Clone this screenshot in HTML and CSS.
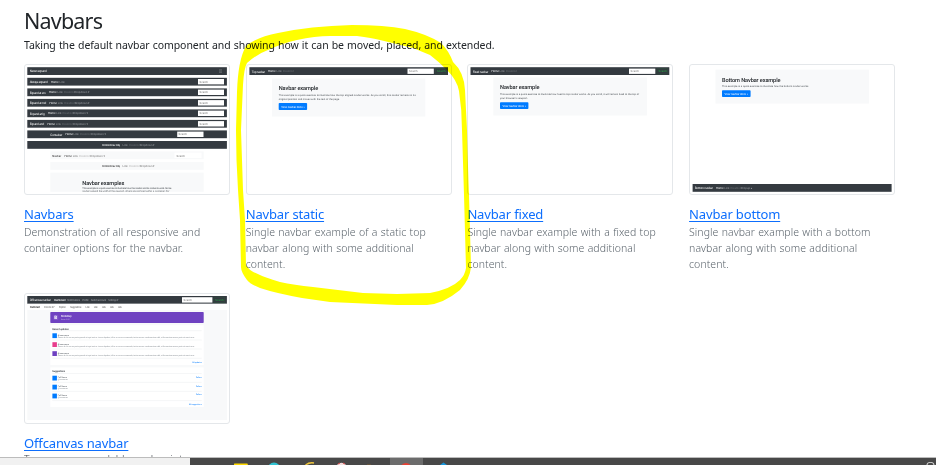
FILE: index.html
```html
<!DOCTYPE html>
<html lang="en">
<head>
<meta charset="utf-8">
<title>Navbars</title>
<link rel="stylesheet" href="styles.css">
</head>
<body>
<main class="page">
  <h2 class="title">Navbars</h2>
  <p class="lead">Taking the default navbar component and showing how it can be moved, placed, and extended.</p>
  <div class="grid">
    <article class="card">
      <svg class="thumb" viewBox="25 65 204 129">
        <g fill="#343a40">
          <rect x="27.3" y="67.2" width="199.6" height="7.8"/><rect x="27.3" y="77.8" width="199.6" height="7.8"/>
          <rect x="27.3" y="88.4" width="199.6" height="7.8"/><rect x="27.3" y="98.9" width="199.6" height="7.8"/>
          <rect x="27.3" y="109.4" width="199.6" height="7.8"/><rect x="27.3" y="119.9" width="199.6" height="7.8"/>
          <rect x="27.3" y="130.4" width="199.6" height="7.8"/><rect x="27.3" y="141" width="199.6" height="7.8"/>
        </g>
        <g fill="#f8f9fa"><rect x="50.3" y="151.4" width="153.4" height="7.8"/><rect x="50.3" y="162" width="153.4" height="7.8"/><rect x="50.3" y="172.6" width="153.4" height="19.2"/></g>
        <g fill="#fff">
          <rect x="198" y="79" width="26" height="5.4"/><rect x="198" y="89.6" width="26" height="5.4"/><rect x="198" y="100.1" width="26" height="5.4"/>
          <rect x="198" y="110.6" width="26" height="5.4"/><rect x="198" y="121.1" width="26" height="5.4"/><rect x="177.2" y="131.6" width="26.3" height="5.4"/><rect x="174.5" y="152.6" width="27" height="5.4"/>
        </g>
        <g class="brand">
          <text x="29.7" y="72.3" textLength="17">Never expand</text><text x="29.7" y="82.9" textLength="18">Always expand</text>
          <text x="29.7" y="93.5" textLength="16">Expand at sm</text><text x="29.7" y="104" textLength="16.5">Expand at md</text>
          <text x="29.7" y="114.5" textLength="15">Expand at lg</text><text x="29.7" y="125" textLength="14.5">Expand at xl</text>
          <text x="50.3" y="135.5" textLength="12">Container</text>
        </g>
        <g class="nav">
          <text x="51" y="82.8" class="on">Home</text><text x="59.5" y="82.8">Link</text>
          <text x="49" y="93.4" class="on">Home</text><text x="57.5" y="93.4">Link</text><text x="64" y="93.4" class="off">Disabled</text><text x="74.5" y="93.4">Dropdown ▾</text>
          <text x="49.4" y="103.9" class="on">Home</text><text x="57.8" y="103.9">Link</text><text x="64.2" y="103.9" class="off">Disabled</text><text x="74.7" y="103.9">Dropdown ▾</text>
          <text x="48" y="114.4" class="on">Home</text><text x="56.3" y="114.4">Link</text><text x="62.6" y="114.4" class="off">Disabled</text><text x="73" y="114.4">Dropdown ▾</text>
          <text x="47.4" y="124.9" class="on">Home</text><text x="55.8" y="124.9">Link</text><text x="62" y="124.9" class="off">Disabled</text><text x="73" y="124.9">Dropdown ▾</text>
          <text x="65.4" y="135.4" class="on">Home</text><text x="73.5" y="135.4">Link</text><text x="80" y="135.4" class="off">Disabled</text><text x="91" y="135.4">Dropdown ▾</text>
          <text x="102" y="146" class="on" textLength="18">Centered nav only</text><text x="122.5" y="146">Link</text><text x="129" y="146" class="off">Disabled</text><text x="139.7" y="146">Dropdown ▾</text>
        </g>
        <g class="nav light">
          <text x="52.2" y="156.6" class="on" textLength="9">Navbar</text><text x="64.4" y="156.5" class="on">Home</text><text x="72.7" y="156.5">Link</text><text x="79" y="156.5" class="off">Disabled</text><text x="90" y="156.5">Dropdown ▾</text>
          <text x="102" y="167" class="on" textLength="18">Centered nav only</text><text x="122.5" y="167">Link</text><text x="129" y="167" class="off">Disabled</text><text x="139.7" y="167">Dropdown ▾</text>
          <text x="199.5" y="82.8">Search</text><text x="199.5" y="93.4">Search</text><text x="199.5" y="103.9">Search</text><text x="199.5" y="114.4">Search</text><text x="199.5" y="124.9">Search</text><text x="178.5" y="135.4">Search</text><text x="176.5" y="156.5">Search</text>
        </g>
        <path d="M219 69.8h3M219 71.1h3M219 72.4h3" stroke="#858a8f" stroke-width=".5"/>
        <text x="82.3" y="184.6" class="head" textLength="42">Navbar examples</text>
        <text x="82.3" y="189.4" class="copy" textLength="89">This example is a quick exercise to illustrate how the navbar and its contents work. Some</text>
        <svg x="82" y="190" width="95" height="1.7" viewBox="82 190 95 1.7"><text x="82.3" y="192.4" class="copy" textLength="87">navbars extend the width of the viewport, others are confined within a .container. For</text></svg>
      </svg>
      <h3 class="name"><a href="#">Navbars</a></h3>
      <p class="desc">Demonstration of all responsive and<br>container options for the navbar.</p>
    </article>

    <article class="card">
      <svg class="thumb" viewBox="247 65 204 129">
        <rect x="249.4" y="67.2" width="198.6" height="7.8" fill="#343a40"/>
        <rect x="407.5" y="68.6" width="26.3" height="5.3" fill="#fff"/><rect x="435.6" y="68.6" width="10.5" height="5.3" rx=".6" class="btn"/>
        <g class="brand"><text x="251.7" y="72.5" textLength="13.3">Top navbar</text></g>
        <g class="nav"><text x="268" y="72.3" class="on">Home</text><text x="276.5" y="72.3">Link</text><text x="283" y="72.3" class="off">Disabled</text></g>
        <g class="nav light"><text x="409" y="72.3">Search</text></g><text x="437" y="72.3" class="green">Search</text>
        <rect x="272" y="78.5" width="153.3" height="38" fill="#f8f9fa"/>
        <text x="278.7" y="90.3" class="head" textLength="39.5">Navbar example</text>
        <text x="278.7" y="96" class="copy" textLength="137">This example is a quick exercise to illustrate how the top-aligned navbar works. As you scroll, this navbar remains in its</text>
        <text x="278.7" y="100.2" class="copy" textLength="61">original position and moves with the rest of the page.</text>
        <rect x="278.7" y="103" width="28.4" height="7" rx=".8" fill="#007bff"/><text x="281.2" y="107.6" class="action" textLength="23.5">View navbar docs »</text>
      </svg>
      <h3 class="name"><a href="#">Navbar static</a></h3>
      <p class="desc">Single navbar example of a static top<br>navbar along with some additional<br>content.</p>
    </article>

    <article class="card">
      <svg class="thumb" viewBox="468.5 65 204 129">
        <rect x="471" y="67.2" width="198.8" height="7.8" fill="#343a40"/>
        <rect x="629.5" y="68.6" width="26.3" height="5.3" fill="#fff"/><rect x="657.4" y="68.6" width="10.5" height="5.3" rx=".6" class="btn"/>
        <g class="brand"><text x="473.2" y="72.5" textLength="15.5">Fixed navbar</text></g>
        <g class="nav"><text x="492" y="72.3" class="on">Home</text><text x="500" y="72.3">Link</text><text x="506.5" y="72.3" class="off">Disabled</text></g>
        <g class="nav light"><text x="631" y="72.3">Search</text></g><text x="659" y="72.3" class="green">Search</text>
        <rect x="493.8" y="77.5" width="153.6" height="38" fill="#f8f9fa"/>
        <text x="500.5" y="89.4" class="head" textLength="39.5">Navbar example</text>
        <text x="500.5" y="94.9" class="copy" textLength="139">This example is a quick exercise to illustrate how fixed to top navbar works. As you scroll, it will remain fixed to the top of</text>
        <text x="500.5" y="99.1" class="copy" textLength="28">your browser’s viewport.</text>
        <rect x="500.5" y="102.2" width="28.4" height="6.8" rx=".8" fill="#007bff"/><text x="503" y="106.7" class="action" textLength="23.5">View navbar docs »</text>
      </svg>
      <h3 class="name"><a href="#">Navbar fixed</a></h3>
      <p class="desc">Single navbar example with a fixed top<br>navbar along with some additional<br>content.</p>
    </article>

    <article class="card">
      <svg class="thumb" viewBox="690 65 204 129">
        <rect x="715.5" y="69.6" width="153.4" height="34" fill="#f8f9fa"/>
        <text x="722" y="81.8" class="head" textLength="58.5">Bottom Navbar example</text>
        <text x="722" y="87.2" class="copy" textLength="87">This example is a quick exercise to illustrate how the bottom navbar works.</text>
        <rect x="722" y="90.3" width="28.6" height="6.8" rx=".8" fill="#007bff"/><text x="724.5" y="94.8" class="action" textLength="23.5">View navbar docs »</text>
        <rect x="692.6" y="184" width="199" height="7.8" fill="#343a40"/>
        <g class="brand"><text x="694.8" y="189.2" textLength="18">Bottom navbar</text></g>
        <g class="nav"><text x="716" y="189" class="on">Home</text><text x="724.3" y="189">Link</text><text x="730.5" y="189" class="off">Disabled</text><text x="741" y="189">Dropup ▴</text></g>
      </svg>
      <h3 class="name"><a href="#">Navbar bottom</a></h3>
      <p class="desc">Single navbar example with a bottom<br>navbar along with some additional<br>content.</p>
    </article>

    <article class="card">
      <svg class="thumb" viewBox="25 294 204 129">
        <rect x="27.3" y="296" width="199.6" height="124" fill="#f8f9fa"/><rect x="27.3" y="296" width="199.6" height="7.8" fill="#343a40"/><rect x="27.3" y="303.8" width="199.6" height="6.2" fill="#fff"/>
        <rect x="182" y="297.2" width="30.4" height="5.4" fill="#fff"/><rect x="213.8" y="297.2" width="10.8" height="5.4" rx=".6" class="btn"/>
        <g class="brand"><text x="29.7" y="301.2" textLength="21">Offcanvas navbar</text></g>
        <g class="nav"><text x="54" y="301.1" class="on" textLength="11.5">Dashboard</text><text x="67.3" y="301.1" textLength="13">Notifications</text><text x="82.3" y="301.1" textLength="6.5">Profile</text><text x="90.7" y="301.1" textLength="15.5">Switch account</text><text x="108.3" y="301.1" textLength="10">Settings ▾</text></g>
        <g class="nav light"><text x="183.5" y="301.1">Search</text>
          <text x="29.7" y="308" class="on" textLength="10.4">Dashboard</text><text x="44" y="308" textLength="10.5">Friends 27</text><text x="59" y="308" textLength="7">Explore</text><text x="70" y="308" textLength="11.5">Suggestions</text><text x="85.6" y="308" textLength="4">Link</text><text x="93.7" y="308" textLength="4">Link</text><text x="102" y="308" textLength="4">Link</text><text x="110" y="308" textLength="4">Link</text><text x="118" y="308" textLength="4">Link</text></g>
        <text x="215.3" y="301.1" class="green">Search</text>
        <rect x="50.3" y="312.1" width="153.4" height="10.8" rx=".7" fill="#6f42c1"/>
        <rect x="53.5" y="315" width="4.8" height="5" rx="1" fill="#8057c9"/><text x="54.3" y="319.3" class="logo">B</text>
        <g class="action"><text x="61" y="317.4" textLength="10.5">Bootstrap</text><text x="61" y="319.8" class="tiny">Since 2011</text></g>
        <rect x="50.3" y="325.2" width="153.4" height="39.8" fill="#fff"/><rect x="50.3" y="367.4" width="153.4" height="39.7" fill="#fff"/>
        <path d="M52.3 330.7h149.4M52.3 340h149.4M52.3 349h149.4M52.3 358.3h149.4M52.3 373.5h149.4M52.3 382.4h149.4M52.3 391.4h149.4M52.3 400.6h149.4" stroke="#e5e8eb" stroke-width=".4"/>
        <g class="section"><text x="52.3" y="329.6" textLength="16.5">Recent updates</text><text x="52.3" y="372" textLength="12.8">Suggestions</text></g>
        <g fill="#007bff"><rect x="52.4" y="333.3" width="4.5" height="4.8"/><rect x="52.4" y="375.7" width="4.5" height="4.8"/><rect x="52.4" y="384.7" width="4.5" height="4.8"/><rect x="52.4" y="393.6" width="4.5" height="4.8"/></g>
        <rect x="52.4" y="342.2" width="4.5" height="4.8" fill="#e83e8c"/><rect x="52.4" y="351.2" width="4.5" height="4.8" fill="#6f42c1"/>
        <g class="feed">
          <text x="57.8" y="335.6" class="user" textLength="11">@username</text><text x="57.8" y="338" textLength="137">Donec id elit non mi porta gravida at eget metus. Fusce dapibus, tellus ac cursus commodo, tortor mauris condimentum nibh, ut fermentum massa justo sit amet risus.</text>
          <text x="57.8" y="344.5" class="user" textLength="11">@username</text><text x="57.8" y="346.9" textLength="137">Donec id elit non mi porta gravida at eget metus. Fusce dapibus, tellus ac cursus commodo, tortor mauris condimentum nibh, ut fermentum massa justo sit amet risus.</text>
          <text x="57.8" y="353.5" class="user" textLength="11">@username</text><text x="57.8" y="355.9" textLength="137">Donec id elit non mi porta gravida at eget metus. Fusce dapibus, tellus ac cursus commodo, tortor mauris condimentum nibh, ut fermentum massa justo sit amet risus.</text>
          <text x="57.8" y="378" class="user" textLength="9">Full Name</text><text x="57.8" y="380.3" textLength="10">@username</text>
          <text x="57.8" y="387" class="user" textLength="9">Full Name</text><text x="57.8" y="389.3" textLength="10">@username</text>
          <text x="57.8" y="395.9" class="user" textLength="9">Full Name</text><text x="57.8" y="398.2" textLength="10">@username</text>
        </g>
        <g class="more"><text x="192.2" y="362.6" textLength="9.5">All updates</text><text x="196" y="377.5" textLength="5.7">Follow</text><text x="196" y="386.5" textLength="5.7">Follow</text><text x="196" y="395.4" textLength="5.7">Follow</text><text x="189" y="404.9" textLength="12.7">All suggestions</text></g>
      </svg>
      <h3 class="name"><a href="#">Offcanvas navbar</a></h3>
      <p class="desc dark">Turn your expandable navbar into</p>
    </article>
  </div>
</main>
<footer class="taskbar">
  <div class="search"></div>
  <svg class="apps" width="746" height="7" viewBox="190 458 746 7">
    <rect x="390" y="458" width="33" height="7" fill="#6c6c6c"/>
    <path d="M234 464q0-.5.5-.5H247q.8 0 .8.8V465H234z" fill="#ffd900"/>
    <circle cx="274" cy="469" r="6.5" fill="#30c3d2"/>
    <path d="M305.5 465q4-3 8.5-2" fill="none" stroke="#f0c63c" stroke-width="1.4"/>
    <circle cx="341.5" cy="468.5" r="5.7" fill="#f4dcdc"/><path d="M338 464l2-1M343 463l2 1" stroke="#d34949"/>
    <path d="M367 464.7h4" stroke="#755b38" stroke-width=".8"/>
    <circle cx="406" cy="469" r="6" fill="#e64235"/>
    <path d="M440 465l3.5-2.4L447 465z" fill="#1696dc"/>
  </svg>
  <span class="clock">오후</span>
</footer>
<svg class="marker" width="936" height="465" viewBox="0 0 936 465">
  <path fill="#ff0" fill-rule="evenodd" d="M236 130L237 92Q238 60 246 46Q257 37 278 33Q310 26 352 25Q385 25 405 29Q427 34 441 43Q449 51 453 62Q464 72 465 90L467 130Q468 170 469 195L471 267Q470 279 460 290Q443 304 427 305L397 305L330 302L302 298Q275 293 260 288Q250 284 247 280Q241 272 241 267L240 220L238 190Q236 160 236 130ZM241 130L243 85Q244 68 247 63Q257 54 268 50Q283 43 297 40Q315 36 330 36L357 36Q372 38 380 40L413 48L430 55Q438 61 447 70Q457 80 459 91Q462 110 462 130L464 195L466 268Q465 275 460 280Q451 289 430 293L397 294L363 293L313 287Q294 285 280 282Q264 277 260 275Q249 271 246 265L245 220L243 190Z"/>
</svg>
</body>
</html>
```
FILE: styles.css
```css
* { box-sizing: border-box; }
body {
  margin: 0;
  width: 936px;
  height: 465px;
  overflow: hidden;
  display: flex;
  flex-direction: column;
  background: #fff;
  color: #212529;
  font-family: "Noto Sans", "Noto Sans CJK KR", sans-serif;
}
h2, h3, p { margin: 0; font-weight: 400; }
.page { height: 457px; overflow: hidden; padding: 6px 24px 0; }
.title { font-size: 21.5px; line-height: 30px; letter-spacing: -.8px; }
.lead { font-size: 10.5px; line-height: 18px; letter-spacing: -.07px; word-spacing: .5px; white-space: nowrap; }
.grid {
  display: grid;
  grid-template-columns: repeat(4, 206px);
  column-gap: 15.7px;
  grid-auto-rows: 229px;
  padding-top: 10px;
}
.thumb {
  display: block;
  width: 206px;
  height: 131px;
  border: 1px solid #e4e7ea;
  border-radius: 3px;
}
.name { margin-top: 10px; font-size: 13px; line-height: 18px; letter-spacing: -.15px; white-space: nowrap; }
.name a { color: #0d6efd; text-underline-offset: 2px; }
.desc { margin-top: 1px; font-size: 10.5px; line-height: 16px; letter-spacing: .06px; word-spacing: .5px; color: #5b646c; white-space: nowrap; font-weight: 300; }
.desc.dark { margin-top: -1px; color: #40464c; }

.thumb text { font-family: Roboto, sans-serif; font-size: 2.8px; text-rendering: geometricPrecision; }
.thumb .brand text { fill: #f5f5f5; font-size: 3.1px; }
.thumb .nav text { fill: #999ca0; }
.thumb .nav .on { fill: #fff; }
.thumb .nav .off { fill: #676c71; }
.thumb .light text { fill: #777; }
.thumb .light .on { fill: #222; }
.thumb .light .off { fill: #bbb; }
.thumb .head { font-size: 5.6px; font-weight: 500; fill: #212529; }
.thumb .copy { font-size: 2.5px; fill: #454b50; }
.thumb .action, .thumb .action text { font-size: 2.8px; fill: #fff; }
.thumb .action .tiny { font-size: 1.9px; fill: #c4aee8; }
.thumb .green { fill: #28a745; }
.thumb .btn { fill: none; stroke: #28693b; stroke-width: .3px; }
.thumb .logo { font-size: 4.6px; font-weight: 700; fill: #fff; }
.thumb .section text { font-size: 2.5px; font-weight: 500; fill: #343a40; }
.thumb .feed text { font-size: 1.9px; fill: #8d9399; }
.thumb .feed .user { font-size: 2.1px; fill: #555b61; }
.thumb .more text { font-size: 2px; fill: #007bff; }

.taskbar { display: flex; height: 8px; background: #484848; border-top: 1px solid #bcbcbc; overflow: hidden; position: relative; }
.search { width: 190px; height: 7px; background: #f1f1f1; }
.apps { display: block; }
.clock { position: absolute; left: 925px; top: 2px; font-size: 12px; line-height: 16px; color: #ddd; white-space: nowrap; }
.marker { position: absolute; left: 0; top: 0; mix-blend-mode: multiply; pointer-events: none; }
```
